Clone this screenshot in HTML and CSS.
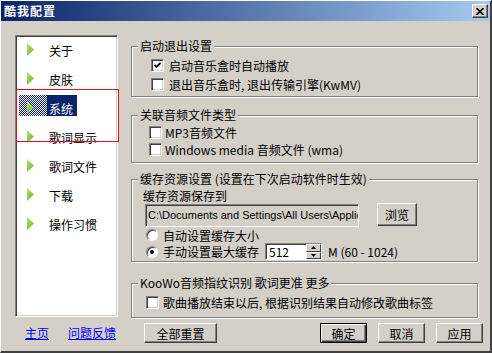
FILE: index.html
```html
<!DOCTYPE html>
<html lang="zh-CN">
<head>
    <meta charset="UTF-8">
    <meta name="viewport" content="width=device-width, initial-scale=1.0">
    <title>酷我配置</title>
    <link rel="stylesheet" href="styles.css">
</head>
<body>

    <div class="window">
        <div class="titlebar">
            <span class="title">酷我配置</span>
            <span class="close-btn">
                <svg width="8" height="7" viewBox="0 0 8 7">
                    <path d="M0.5 0 L7.5 7 M7.5 0 L0.5 7" stroke="#000" stroke-width="1.6"/>
                </svg>
            </span>
        </div>

        <div class="dialog">
            <div class="side">
                <ul class="nav">
                    <li class="nav-item"><span class="arrow"></span><span class="nav-text">关于</span></li>
                    <li class="nav-item"><span class="arrow"></span><span class="nav-text">皮肤</span></li>
                    <li class="nav-item selected"><span class="arrow"></span><span class="nav-text">系统</span></li>
                    <li class="nav-item"><span class="arrow"></span><span class="nav-text">歌词显示</span></li>
                    <li class="nav-item"><span class="arrow"></span><span class="nav-text">歌词文件</span></li>
                    <li class="nav-item"><span class="arrow"></span><span class="nav-text">下载</span></li>
                    <li class="nav-item"><span class="arrow"></span><span class="nav-text">操作习惯</span></li>
                </ul>
                <div class="focus-frame"></div>
                <div class="links">
                    <a href="#">主页</a>
                    <a href="#">问题反馈</a>
                </div>
            </div>

            <div class="content">
                <fieldset class="group g1">
                    <legend>启动退出设置</legend>
                    <div class="row">
                        <span class="check">
                            <svg width="7" height="7" viewBox="0 0 7 7"><path d="M0.5 3 L2.5 5 L6.5 1" stroke="#000" stroke-width="1.8" fill="none"/></svg>
                        </span>
                        <span class="row-text">启动音乐盒时自动播放</span>
                    </div>
                    <div class="row">
                        <span class="check"></span>
                        <span class="row-text">退出音乐盒时, 退出传输引擎(KwMV)</span>
                    </div>
                </fieldset>

                <fieldset class="group g2">
                    <legend>关联音频文件类型</legend>
                    <div class="row">
                        <span class="check"></span>
                        <span class="row-text">MP3音频文件</span>
                    </div>
                    <div class="row">
                        <span class="check"></span>
                        <span class="row-text">Windows media 音频文件 (wma)</span>
                    </div>
                </fieldset>

                <fieldset class="group g3">
                    <legend>缓存资源设置 (设置在下次启动软件时生效)</legend>
                    <div class="cache-label">缓存资源保存到</div>
                    <div class="path-row">
                        <div class="path-input">C:\Documents and Settings\All Users\Applic</div>
                        <button class="btn browse-btn">浏览</button>
                    </div>
                    <div class="row radio-row">
                        <span class="radio"></span>
                        <span class="row-text">自动设置缓存大小</span>
                    </div>
                    <div class="row radio-row last">
                        <span class="radio checked"></span>
                        <span class="row-text">手动设置最大缓存</span>
                        <div class="spin">
                            <span class="spin-value">512</span>
                            <span class="spin-btns">
                                <span class="spin-btn"><svg width="5" height="3" viewBox="0 0 5 3"><path d="M0 3 L2.5 0 L5 3 Z" fill="#000"/></svg></span>
                                <span class="spin-btn"><svg width="5" height="3" viewBox="0 0 5 3"><path d="M0 0 L2.5 3 L5 0 Z" fill="#000"/></svg></span>
                            </span>
                        </div>
                        <span class="range">M (60 - 1024)</span>
                    </div>
                </fieldset>

                <fieldset class="group g4">
                    <legend>KooWo音频指纹识别 歌词更准 更多</legend>
                    <div class="row">
                        <span class="check"></span>
                        <span class="row-text">歌曲播放结束以后, 根据识别结果自动修改歌曲标签</span>
                    </div>
                </fieldset>

                <div class="actions">
                    <button class="btn reset-btn">全部重置</button>
                    <div class="btn-group">
                        <button class="btn default">确定</button>
                        <button class="btn">取消</button>
                        <button class="btn">应用</button>
                    </div>
                </div>
            </div>
        </div>
    </div>

</body>
</html>
```

FILE: styles.css
```css
body {
    margin: 0;
    padding: 0;
    font-family: "Noto Sans CJK SC", "Liberation Sans", sans-serif;
    font-size: 12px;
    color: #000;
    background-color: #d4d0c8;
}

.window {
    width: 492px;
    height: 353px;
    box-sizing: border-box;
    background-color: #d4d0c8;
    border-top: 1px solid #fff;
    border-left: 1px solid #fff;
    border-right: 2px solid #404040;
    border-bottom: 2px solid #404040;
}

.titlebar {
    height: 20px;
    display: flex;
    align-items: center;
    justify-content: space-between;
    padding-left: 3px;
    background: linear-gradient(to right, #0a246a, #a6caf0);
}

.title {
    color: #fff;
    font-weight: bold;
    font-size: 12px;
    letter-spacing: 1px;
    line-height: 14px;
}

.close-btn {
    width: 16px;
    height: 14px;
    box-sizing: border-box;
    margin-right: 2px;
    display: flex;
    align-items: center;
    justify-content: center;
    background-color: #d4d0c8;
    border: 1px solid;
    border-color: #fff #404040 #404040 #fff;
    box-shadow: inset -1px -1px 0 #808080;
}

.dialog {
    display: flex;
    padding: 14px 0 0 14px;
}

/* left list */

.side {
    width: 103px;
    position: relative;
}

.nav {
    list-style: none;
    margin: 0;
    padding: 1px 0 0 1px;
    height: 282px;
    box-sizing: border-box;
    background-color: #fff;
    border: 1px solid;
    border-color: #808080 #fff #fff #808080;
    box-shadow: inset 1px 1px 0 #404040, inset -1px -1px 0 #d4d0c8;
}

.nav-item {
    position: relative;
    display: flex;
    height: 29px;
    padding-left: 10px;
}

.arrow {
    width: 7px;
    height: 13px;
    margin-top: 6px;
    background: linear-gradient(135deg, #b9e37c, #6cb02a);
    clip-path: polygon(0 0, 100% 50%, 0 100%);
}

.nav-text {
    height: 21px;
    box-sizing: border-box;
    margin-left: 13px;
    padding: 6px 4px 0 2px;
    line-height: 15px;
}

.nav-item.selected .nav-text {
    background-color: #0a246a;
    color: #fff;
}

.nav-item.selected::before {
    content: "";
    position: absolute;
    left: 2px;
    top: 0;
    width: 28px;
    height: 21px;
    background: repeating-conic-gradient(#0a246a 0 25%, transparent 0 50%) 0 0 / 2px 2px;
}

.focus-frame {
    position: absolute;
    left: 1px;
    top: 54px;
    width: 103px;
    height: 53px;
    box-sizing: border-box;
    border: 1px solid #e0101c;
}

.links {
    display: flex;
    gap: 19px;
    margin-top: 8px;
    padding-left: 10px;
    line-height: 16px;
}

.links a {
    color: #0000ff;
    text-decoration: underline;
}

/* right side */

.content {
    width: 352px;
    margin-left: 13px;
    margin-top: 4px;
}

.group {
    width: 347px;
    box-sizing: border-box;
    margin: 0;
    min-inline-size: 0;
    border: 1px solid #808080;
    box-shadow: 1px 1px 0 #fff, inset 1px 1px 0 #fff;
    padding: 3px 0 2px 6px;
}

.group legend {
    padding: 0 2px;
    line-height: 14px;
    background-color: #d4d0c8;
}

.row {
    display: flex;
    align-items: center;
    height: 19px;
    white-space: nowrap;
}

.check {
    width: 13px;
    height: 13px;
    box-sizing: border-box;
    display: flex;
    align-items: center;
    justify-content: center;
    background-color: #fff;
    border: 1px solid;
    border-color: #808080 #fff #fff #808080;
    box-shadow: inset 1px 1px 0 #404040, inset -1px -1px 0 #d4d0c8;
}

.g1 .check {
    margin-left: 13px;
}

.g1 .row-text {
    margin-left: 5px;
}

.g2 {
    margin-top: 11px;
    padding: 2px 0 4px 6px;
}

.g2 .row {
    height: 17px;
}

.g2 .check {
    margin-left: 11px;
}

.g2 .row-text {
    margin-left: 3px;
}

.g3 {
    margin-top: 9px;
    padding: 2px 0 1px 6px;
}

.cache-label {
    margin-left: 5px;
    height: 15px;
    line-height: 15px;
}

.path-row {
    display: flex;
    margin-top: 1px;
}

.path-input {
    width: 214px;
    height: 23px;
    box-sizing: border-box;
    margin-left: 7px;
    padding-left: 2px;
    font-family: "Liberation Sans", sans-serif;
    font-size: 11px;
    line-height: 21px;
    white-space: nowrap;
    overflow: hidden;
    border: 1px solid;
    border-color: #808080 #fff #fff #808080;
    box-shadow: inset 1px 1px 0 #404040, inset -1px -1px 0 #d4d0c8;
}

.btn {
    height: 20px;
    box-sizing: border-box;
    padding: 0;
    font-family: inherit;
    font-size: 12px;
    color: #000;
    background-color: #d4d0c8;
    border: 1px solid;
    border-color: #fff #404040 #404040 #fff;
    box-shadow: inset -1px -1px 0 #808080;
}

.browse-btn {
    width: 40px;
    height: 23px;
    margin-left: 18px;
    margin-top: -1px;
}

.radio-row {
    height: 16px;
}

.radio-row.last {
    height: 17px;
}

.radio {
    width: 12px;
    height: 12px;
    box-sizing: border-box;
    margin-left: 8px;
    border-radius: 50%;
    background-color: #fff;
    border: 1px solid;
    border-color: #808080 #fff #fff #808080;
    box-shadow: inset 1px 1px 0 #404040;
    display: flex;
    align-items: center;
    justify-content: center;
}

.radio.checked::after {
    content: "";
    width: 4px;
    height: 4px;
    border-radius: 50%;
    background-color: #000;
}

.radio-row .row-text {
    margin-left: 5px;
}

.spin {
    display: flex;
    width: 57px;
    height: 17px;
    box-sizing: border-box;
    margin-left: 6px;
    background-color: #fff;
    border: 1px solid;
    border-color: #808080 #fff #fff #808080;
    box-shadow: inset 1px 1px 0 #404040;
}

.spin-value {
    flex: 1;
    padding-left: 3px;
    line-height: 15px;
}

.spin-btns {
    display: flex;
    flex-direction: column;
    width: 15px;
}

.spin-btn {
    flex: 1;
    display: flex;
    align-items: center;
    justify-content: center;
    background-color: #d4d0c8;
    border: 1px solid;
    border-color: #fff #404040 #404040 #fff;
}

.range {
    margin-left: 6px;
}

.g4 {
    margin-top: 14px;
    padding: 3px 0 6px 6px;
}

.g4 .row {
    height: 18px;
}

.g4 .check {
    margin-left: 8px;
}

.g4 .row-text {
    margin-left: 4px;
}

.actions {
    display: flex;
    margin-top: 5px;
}

.reset-btn {
    width: 73px;
    margin-left: 13px;
}

.btn-group {
    display: flex;
    gap: 11px;
    margin-left: auto;
}

.btn-group .btn {
    width: 47px;
}

.btn.default {
    border: 1px solid #000;
    box-shadow: inset 1px 1px 0 #fff, inset -1px -1px 0 #404040, inset -2px -2px 0 #808080;
}
```
